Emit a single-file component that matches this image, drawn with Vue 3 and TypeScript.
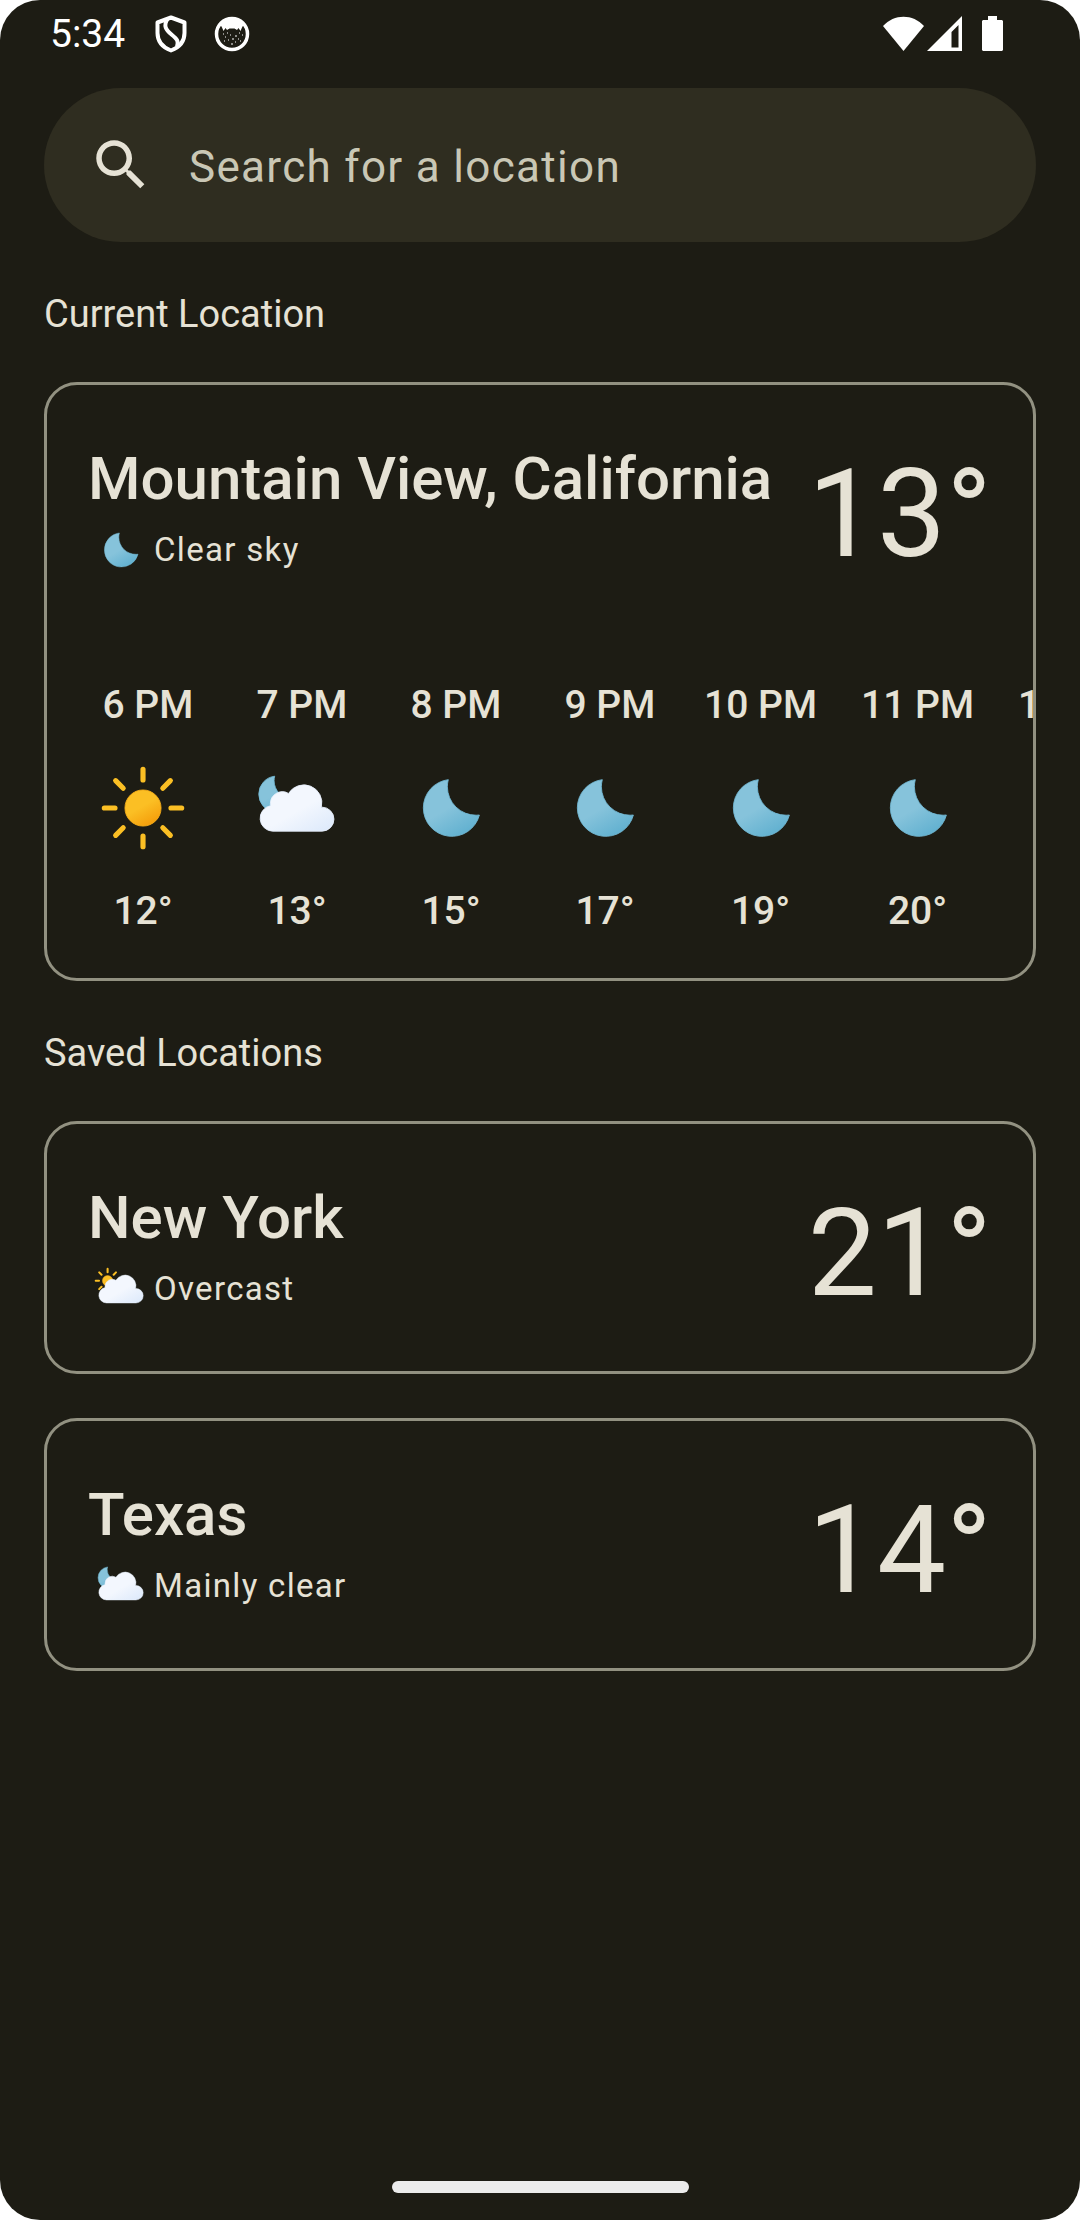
<script setup lang="ts">
import { ref } from 'vue'

type Sky = 'sun' | 'moon' | 'cloud-sun' | 'cloud-moon'

interface Place {
  name: string
  sky: Sky
  summary: string
  temp: number
}

interface Hour {
  label: string
  sky: Sky
  temp?: number
}

const query = ref('')

const current: Place = { name: 'Mountain View, California', sky: 'moon', summary: 'Clear sky', temp: 13 }

const hours: Hour[] = [
  { label: '6 PM', sky: 'sun', temp: 12 },
  { label: '7 PM', sky: 'cloud-moon', temp: 13 },
  { label: '8 PM', sky: 'moon', temp: 15 },
  { label: '9 PM', sky: 'moon', temp: 17 },
  { label: '10 PM', sky: 'moon', temp: 19 },
  { label: '11 PM', sky: 'moon', temp: 20 },
  { label: '12 AM', sky: 'moon' },
]

const saved: Place[] = [
  { name: 'New York', sky: 'cloud-sun', summary: 'Overcast', temp: 21 },
  { name: 'Texas', sky: 'cloud-moon', summary: 'Mainly clear', temp: 14 },
]
</script>

<template>
  <div class="screen">
    <!-- Shared weather symbols -->
    <svg class="sprite" aria-hidden="true">
      <defs>
        <linearGradient id="g-sun" x1="26.75" y1="22.91" x2="37.25" y2="41.09" gradientUnits="userSpaceOnUse">
          <stop offset="0" stop-color="#fbbf24" />
          <stop offset=".45" stop-color="#fbbf24" />
          <stop offset="1" stop-color="#f59e0b" />
        </linearGradient>
        <linearGradient id="g-sun-small" x1="16.5" y1="19.67" x2="21.5" y2="28.33" gradientUnits="userSpaceOnUse">
          <stop offset="0" stop-color="#fbbf24" />
          <stop offset=".45" stop-color="#fbbf24" />
          <stop offset="1" stop-color="#f59e0b" />
        </linearGradient>
        <linearGradient id="g-moon" x1="21.92" y1="18.75" x2="39.52" y2="49.25" gradientUnits="userSpaceOnUse">
          <stop offset="0" stop-color="#86c3db" />
          <stop offset=".45" stop-color="#86c3db" />
          <stop offset="1" stop-color="#5eafcf" />
        </linearGradient>
        <linearGradient id="g-moon-small" x1="13.58" y1="15.57" x2="24.79" y2="34.98" gradientUnits="userSpaceOnUse">
          <stop offset="0" stop-color="#86c3db" />
          <stop offset=".45" stop-color="#86c3db" />
          <stop offset="1" stop-color="#5eafcf" />
        </linearGradient>
        <linearGradient id="g-cloud" x1="22.56" y1="21.96" x2="39.2" y2="50.8" gradientUnits="userSpaceOnUse">
          <stop offset="0" stop-color="#f3f7fe" />
          <stop offset=".45" stop-color="#f3f7fe" />
          <stop offset="1" stop-color="#deeafb" />
        </linearGradient>
        <path
          id="cloud-shape"
          d="M46.5 31.5h-.32a10.49 10.49 0 0 0-19.11-8 7 7 0 0 0-10.57 6 7.21 7.21 0 0 0 .1 1.14A7.5 7.5 0 0 0 18 45.5h28.5a7 7 0 0 0 0-14z"
          fill="url(#g-cloud)"
          stroke="#e6effc"
          stroke-width=".5"
        />
      </defs>
      <symbol id="sun" viewBox="0 0 64 64">
        <circle cx="32" cy="32" r="10.5" fill="url(#g-sun)" stroke="#f8af18" stroke-width=".5" />
        <path
          d="M32 15.71V9.5M32 54.5v-6.21M43.52 20.48l4.39-4.39M16.09 47.91l4.39-4.39M20.48 20.48l-4.39-4.39M47.91 47.91l-4.39-4.39M15.71 32H9.5M54.5 32h-6.21"
          fill="none"
          stroke="#fbbf24"
          stroke-width="3"
          stroke-linecap="round"
        />
      </symbol>
      <symbol id="moon" viewBox="0 0 64 64">
        <path
          d="M46.66 36.2a16.66 16.66 0 0 1-16.78-16.55 16.29 16.29 0 0 1 .55-4.15A16.56 16.56 0 1 0 48.5 36.1c-.61.06-1.22.1-1.84.1z"
          fill="url(#g-moon)"
          stroke="#72b9d5"
          stroke-width=".5"
        />
      </symbol>
      <symbol id="cloud-sun" viewBox="0 0 64 64">
        <circle cx="19" cy="24" r="5" fill="url(#g-sun-small)" stroke="#f8af18" stroke-width=".5" />
        <path
          d="M19 15.67V12.5M24.89 18.11l2.24-2.24M10.87 32.13l2.24-2.24M13.11 18.11l-2.24-2.24M10.67 24H7.5"
          fill="none"
          stroke="#fbbf24"
          stroke-width="2"
          stroke-linecap="round"
        />
        <use href="#cloud-shape" />
      </symbol>
      <symbol id="cloud-moon" viewBox="0 0 64 64">
        <path
          d="M29.33 26.68a10.61 10.61 0 0 1-10.68-10.54A10.5 10.5 0 0 1 19 13.5a10.54 10.54 0 1 0 11.5 13.11 11.48 11.48 0 0 1-1.17.07z"
          fill="url(#g-moon-small)"
          stroke="#72b9d5"
          stroke-width=".5"
        />
        <use href="#cloud-shape" />
      </symbol>
    </svg>

    <header class="status-bar">
      <time class="clock">5:34</time>
      <svg class="notice" viewBox="0 0 36 38" aria-hidden="true">
        <path d="M18 2.500 31.500 7.500V18c0 8.500-5.500 14.500-13.500 17.500C10 32.500 4.500 26.500 4.500 18V7.500z" fill="none" stroke="#fff" stroke-width="4" stroke-linejoin="round" />
        <path d="M14.500 4C10 11 13 15 18.500 19.500 24 24 26 26 24 32" fill="none" stroke="#fff" stroke-width="4" />
      </svg>
      <svg class="notice" viewBox="0 0 36 38" aria-hidden="true">
        <circle cx="18" cy="19" r="15.500" fill="none" stroke="#fff" stroke-width="3.500" />
        <path d="M6 9C12 1 24 1 30 9l-2 3.500-1.500 3.500-2-3-1.500 2-2.500-1.500h-5L13 15l-1.500-2-2 3L8 12.500z" fill="#fff" />
        <path
          d="M9 19h1M13 18h1M25 18h1M28 20h1M11 22h1M16 20h1M21 21h2M24 24h1M14 25h1M18 24h2M21 27h1M17 29h2M26 26h1M10 26h1"
          stroke="#fff"
        />
      </svg>
      <div class="system">
        <svg width="41" height="36" viewBox="0 0 41 36" aria-label="Wi-Fi">
          <path d="M0 10C11-2.500 30-2.500 41 10L20.500 35z" fill="#fff" />
        </svg>
        <svg class="signal" width="35" height="36" viewBox="0 0 35 36" aria-label="Signal">
          <path d="M35 0v35H0zM31.500 9 24.500 16v15.500h7z" fill="#fff" fill-rule="evenodd" />
        </svg>
        <svg width="21" height="36" viewBox="0 0 21 36" aria-label="Battery">
          <path d="M6 0h9v4h5l1 1v29l-1 1H1l-1-1V5l1-1h5z" fill="#fff" />
        </svg>
      </div>
    </header>

    <main class="content">
      <label class="search">
        <svg class="search-icon" viewBox="0 0 24 24" aria-hidden="true">
          <path
            d="M15.500 14h-.790l-.280-.270C15.410 12.590 16 11.110 16 9.500 16 5.910 13.090 3 9.500 3S3 5.910 3 9.500 5.910 16 9.500 16c1.610 0 3.090-.590 4.230-1.570l.270.280v.790l5 4.990L20.490 19l-4.990-5zm-6 0C7.010 14 5 11.990 5 9.500S7.010 5 9.500 5 14 7.010 14 9.500 11.990 14 9.500 14z"
            fill="currentColor"
          />
        </svg>
        <input v-model="query" class="search-input" type="text" placeholder="Search for a location" aria-label="Search for a location" />
      </label>

      <h2 class="section-title">Current Location</h2>
      <article class="card card-current">
        <div class="summary">
          <div class="place">
            <h3 class="name">{{ current.name }}</h3>
            <p class="condition">
              <svg class="icon-small" aria-hidden="true"><use :href="`#${current.sky}`" /></svg>
              <span>{{ current.summary }}</span>
            </p>
          </div>
          <p class="temp">{{ current.temp }}°</p>
        </div>
        <ol class="hours">
          <li v-for="hour in hours" :key="hour.label" class="hour">
            <!-- One-digit hours keep the slot of the missing digit -->
            <span class="hour-text">{{ hour.label.padStart(5) }}</span>
            <svg class="icon-large" aria-hidden="true"><use :href="`#${hour.sky}`" /></svg>
            <span v-if="hour.temp" class="hour-text">{{ hour.temp }}°</span>
          </li>
        </ol>
      </article>

      <h2 class="section-title">Saved Locations</h2>
      <div class="saved">
        <article v-for="place in saved" :key="place.name" class="card">
          <div class="summary">
            <div class="place">
              <h3 class="name">{{ place.name }}</h3>
              <p class="condition">
                <svg class="icon-small" aria-hidden="true"><use :href="`#${place.sky}`" /></svg>
                <span>{{ place.summary }}</span>
              </p>
            </div>
            <p class="temp">{{ place.temp }}°</p>
          </div>
        </article>
      </div>
    </main>

    <div class="home-bar"></div>
  </div>
</template>

<style>
body {
  margin: 0;
  background: #fff;
}
</style>

<style scoped>
.screen {
  display: flex;
  flex-direction: column;
  box-sizing: border-box;
  min-height: 100vh;
  border-radius: 40px;
  overflow: hidden;
  background: #1d1c14;
  color: #e6e2d5;
  font-family: Roboto, 'Noto Sans', sans-serif;
  font-size: 39px;
}

.sprite {
  position: absolute;
  width: 0;
  height: 0;
}

h2,
h3,
p,
ol {
  margin: 0;
  padding: 0;
  font-weight: 400;
}

.status-bar {
  display: flex;
  align-items: center;
  height: 68px;
  padding: 0 77px 0 50px;
  color: #fff;
}

.clock {
  margin-right: 28px;
  font-size: 39px;
}

.notice {
  width: 36px;
  height: 38px;
  margin-right: 25px;
}

.system {
  display: flex;
  margin-left: auto;
}

.signal {
  margin: 0 20px 0 3px;
}

.content {
  padding: 20px 44px 44px;
}

.search {
  display: flex;
  align-items: center;
  gap: 35px;
  height: 154px;
  box-sizing: border-box;
  padding: 0 44px;
  border-radius: 77px;
  background: #2f2d20;
}

.search-icon {
  flex: none;
  width: 66px;
  height: 66px;
}

.search-input {
  flex: 1;
  min-width: 0;
  height: 66px;
  padding: 4px 0 0;
  border: 0;
  outline: 0;
  background: none;
  color: inherit;
  font: inherit;
  font-size: 44px;
  letter-spacing: 0.03em;
}

.search-input::placeholder {
  color: #c9c7b5;
  opacity: 1;
}

.section-title {
  margin: 44px 0 40px;
  font-size: 38px;
  line-height: 56px;
}

.card {
  padding: 55px 41px 49px;
  border: 3px solid #929181;
  border-radius: 33px;
}

.card-current {
  padding-right: 0;
  padding-bottom: 41px;
  overflow: hidden;
}

.card-current .summary {
  margin: 0 41px 96px 0;
}

.saved {
  display: flex;
  flex-direction: column;
  gap: 44px;
}

.summary {
  display: flex;
  justify-content: space-between;
  height: 143px;
}

.name {
  font-size: 60px;
  font-weight: 500;
  line-height: 77px;
}

.condition {
  display: flex;
  align-items: center;
  font-size: 33px;
  line-height: 44px;
  letter-spacing: 0.04em;
}

.icon-small {
  width: 66px;
  height: 66px;
}

.temp {
  font-size: 123px;
  line-height: 149px;
}

.hours {
  display: flex;
  gap: 44px;
  overflow: hidden;
  list-style: none;
}

.hour {
  display: flex;
  flex: none;
  flex-direction: column;
  align-items: center;
  gap: 22px;
}

.hour-text {
  font-size: 39px;
  font-weight: 500;
  line-height: 52px;
  white-space: pre;
}

.icon-large {
  width: 110px;
  height: 110px;
}

.home-bar {
  width: 27.5%;
  height: 12px;
  margin: auto auto 27px;
  border-radius: 6px;
  background: #ececec;
}
</style>
